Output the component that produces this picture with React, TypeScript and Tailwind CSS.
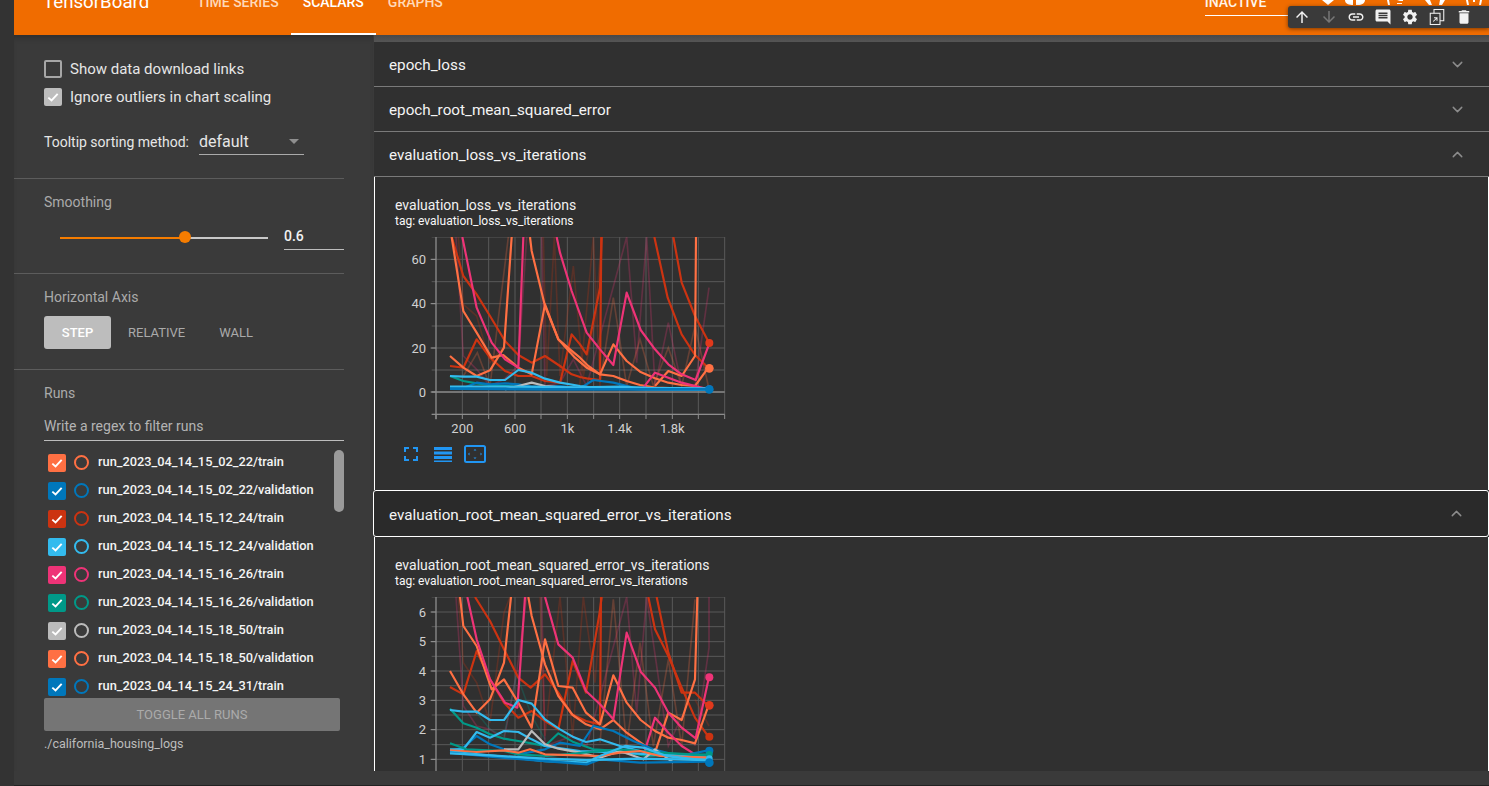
import { ChevronDown, ChevronUp } from "lucide-react";

const OR = "#ff7043", BL = "#0077bb", RD = "#cc3311", CY = "#33bbee", MG = "#ee3377", TL = "#009988", GY = "#bbbbbb";
const runs: [string, string][] = [
  ["run_2023_04_14_15_02_22/train", OR],
  ["run_2023_04_14_15_02_22/validation", BL],
  ["run_2023_04_14_15_12_24/train", RD],
  ["run_2023_04_14_15_12_24/validation", CY],
  ["run_2023_04_14_15_16_26/train", MG],
  ["run_2023_04_14_15_16_26/validation", TL],
  ["run_2023_04_14_15_18_50/train", GY],
  ["run_2023_04_14_15_18_50/validation", OR],
  ["run_2023_04_14_15_24_31/train", BL],
];

type S = [string, string, number?];

const faint1: S[] = [
  [RD, "235,143 250,345 290,380 330,520 372,470 395,143"],
  [MG, "228,143 250,500 290,540 330,590 372,570 415,530 440,143"],
  [OR, "250,560 292,490 330,590 385,143"],
  [RD, "490,143 500,560 523,143 540,560 580,230 610,560 645,400 665,143"],
  [MG, "485,143 495,590 540,580 580,510 620,590 740,143 770,520 800,143 825,590 865,400 905,590"],
  [OR, "660,580 700,325 740,590 780,450 820,590 865,475 905,590 945,410 985,590"],
  [MG, "945,590 987,295"],
  [RD, "560,590 598,600 640,143 660,590"],
];
const series1: S[] = [
  [TL, "210,560 250,575 290,582 330,587 375,590 415,593 500,596 640,598 985,600"],
  [RD, "215,143 250,260 290,315 330,380 375,455 415,497 455,520 495,500 540,530 575,555 600,563 620,567 660,572 664,143"],
  [RD, "210,530 250,535 290,450 330,505 375,545 415,560 455,560 495,575 540,580 575,435 600,465 620,495 660,295 665,143"],
  [RD, "823,143 863,325 905,435 945,497 985,535"],
  [RD, "880,143 905,280 945,380 987,460"],
  [OR, "210,500 250,535 290,560 330,543 372,475 395,143"],
  [OR, "215,143 250,365 290,430 335,505 370,497 415,535 455,555 495,345 535,450 570,480 600,505 625,530 660,555 700,465 740,515 780,547 825,567 865,580 905,587 945,590 985,535"],
  [OR, "450,143 455,185 495,350 535,450 585,505 620,535 660,555 700,560 740,575 780,587 825,595 985,600"],
  [OR, "825,590 865,545 905,560 945,500 948,143"],
  [MG, "247,143 290,355 335,460 375,510 415,535 430,143"],
  [MG, "530,143 540,190 575,305 620,430 660,480 700,527 740,310 782,422 825,480 865,525 905,555 947,572 987,465"],
  [MG, "790,595 825,550 865,565 905,580 985,600"],
  [BL, "210,596 250,596 290,580 330,585 375,582 415,585 455,592 540,590 600,597 640,572 700,580 760,595 985,600"],
  [GY, "375,600 415,590 455,580 495,590 600,598 985,600"],
  [CY, "210,560 250,562 290,562 330,572 375,572 415,542 455,550 495,568 540,580 600,590 660,597 720,598 800,600 985,602"],
  [CY, "210,592 400,592 600,594 720,592 800,596 985,597", 7],
  [BL, "210,598 500,600 985,600", 8],
];
const markers1: [string, number, number, number][] = [
  [MG, 988, 598, 10], ["#e0391c", 988, 461, 12], [OR, 988, 537, 13], [BL, 988, 600, 13],
];
const grid1 = { h: [143, 210, 277, 343, 410, 476, 542, 675], labels: [["60", 210], ["40", 343], ["20", 476], ["0", 608]] as [string, number][] };

const faint2: S[] = [
  [RD, "235,143 250,340 290,400 330,520 372,190 390,143"],
  [MG, "228,143 250,470 290,530 330,540 372,570 410,370 440,143"],
  [TL, "290,490 330,540 372,560 410,375 455,500 495,570"],
  [RD, "480,143 495,560 540,143 578,560 610,143 645,400 665,143"],
  [MG, "485,143 495,590 578,560 620,590 740,143 770,490 800,143 825,315 865,590 905,500"],
  [OR, "660,580 700,150 740,590 780,280 820,590 865,330 905,590 945,150"],
  [MG, "945,590 987,295 987,143"],
  [RD, "945,450 987,530"],
];
const series2: S[] = [
  [RD, "285,143 330,215 372,300 415,385 452,415 495,375 535,430 575,495 618,515 660,525 663,143"],
  [RD, "210,413 250,435 290,305 330,390 372,460 415,505 455,485 495,515 535,540 578,335 618,430 658,195 665,143"],
  [RD, "805,143 825,240 865,320 905,415 945,505 985,562"],
  [RD, "830,143 865,310 905,430 945,430 985,470"],
  [OR, "240,143 250,230 290,290 335,420 372,390 415,460 455,535 495,270 535,410 578,415 618,490 660,525 700,378 740,460 782,512 825,545 865,565 905,572 945,582 985,470"],
  [OR, "210,365 250,435 290,490 330,450 372,340 393,143"],
  [OR, "445,143 455,200 495,345 535,440 578,497 618,525 660,540 700,512 740,550 782,580 825,610 865,490 905,512 945,390 952,143"],
  [MG, "262,143 290,270 330,390 375,460 412,475 435,143"],
  [MG, "495,143 535,285 578,325 618,425 660,465 700,510 740,250 782,367 825,415 865,490 905,535 947,567 987,383"],
  [MG, "790,620 825,505 865,550 905,590 945,615 985,625"],
  [TL, "210,478 250,522 290,535 330,555 372,568 415,575 455,582 495,590 535,552 578,577 640,600 720,605 800,620 985,615"],
  [BL, "210,605 250,595 290,560 330,585 372,600 415,615 495,600 540,580 600,590 640,530 700,545 760,575 820,600 900,620 985,603"],
  [CY, "210,482 250,487 290,487 330,512 372,512 415,452 455,463 495,510 540,540 578,562 618,578 660,570 720,590 780,605 985,630"],
  [CY, "210,600 250,600 290,548 330,565 372,545 415,548 455,570 495,590 600,605 720,610 985,625"],
  [GY, "372,600 415,600 455,545 495,585 535,598 600,610 660,625 720,605 790,630 825,600 880,640"],
  [TL, "210,582 260,600 372,605 415,615 500,620 720,600 840,610 985,618"],
  [OR, "210,603 290,608 372,603 415,610 450,600 495,615 660,620 720,610 780,605 840,620 985,625"],
  [CY, "210,608 330,618 495,635 620,640 660,620 735,590 790,595 860,620 985,635", 7],
  [BL, "210,610 330,622 495,635 620,645 660,630 780,640 985,637", 7],
  [CY, "210,612 330,618 495,628 620,632 780,628 985,632", 7],
];
const markers2: [string, number, number, number][] = [
  [MG, 988, 384, 12], ["#e0391c", 988, 468, 13], [RD, 988, 562, 12], [BL, 988, 604, 12], [TL, 988, 615, 10], [CY, 988, 628, 10], [BL, 988, 640, 13],
];
const grid2 = { h: [143, 188, 232, 277, 321, 365, 409, 453, 497, 541, 586, 630, 675], labels: [["6", 188], ["5", 277], ["4", 365], ["3", 453], ["2", 541], ["1", 630]] as [string, number][] };

const vx = [247, 326, 405, 483, 562, 641, 719, 798, 877, 955, 1034];

function Chart({ faint, series, markers, grid, zero, xLabels }: {
  faint: S[]; series: S[]; markers: [string, number, number, number][];
  grid: { h: number[]; labels: [string, number][] }; zero?: number; xLabels: boolean;
}) {
  return (
    <svg width="360" height="199" viewBox="0 143 1080 597" className="block overflow-hidden" style={{ fontFamily: "Roboto, sans-serif" }}>
      {vx.map((x) => <line key={x} x1={x} x2={x} y1={143} y2={675} stroke="#595959" strokeWidth="3" />)}
      {grid.h.map((y) => <line key={y} x1={155} x2={1034} y1={y} y2={y} stroke="#595959" strokeWidth="3" />)}
      {grid.labels.map(([t, y]) => (
        <g key={t}>
          <line x1={152} x2={168} y1={y} y2={y} stroke="#999" strokeWidth="3" />
          <text x={138} y={y + 14} textAnchor="end" fontSize="39" fill="#d0d0d0">{t}</text>
        </g>
      ))}
      {faint.map(([c, p], i) => <polyline key={i} points={p} fill="none" stroke={c} strokeOpacity="0.25" strokeWidth="5" />)}
      {zero !== undefined && <line x1={155} x2={1034} y1={zero} y2={zero} stroke="#8c8c8c" strokeWidth="4" />}
      <line x1={168} x2={168} y1={143} y2={690} stroke="#8c8c8c" strokeWidth="4" />
      <line x1={155} x2={1034} y1={675} y2={675} stroke="#8c8c8c" strokeWidth="4" />
      {[168, ...vx].map((x) => <line key={x} x1={x} x2={x} y1={675} y2={689} stroke="#8c8c8c" strokeWidth="3" />)}
      {series.map(([c, p, w], i) => <polyline key={i} points={p} fill="none" stroke={c} strokeWidth={w ?? 6.5} strokeLinejoin="round" />)}
      {markers.map(([c, x, y, r], i) => <circle key={i} cx={x} cy={y} r={r} fill={c} />)}
      {xLabels && ([["200", 247], ["600", 405], ["1k", 562], ["1.4k", 719], ["1.8k", 877]] as [string, number][]).map(([t, x]) => (
        <text key={t} x={x} y={732} textAnchor="middle" fontSize="39" fill="#d0d0d0">{t}</text>
      ))}
    </svg>
  );
}

function Check({ color, size = 18 }: { color: string; size?: number }) {
  return (
    <span className="flex shrink-0 items-center justify-center rounded-[2px]" style={{ width: size, height: size, backgroundColor: color }}>
      <svg width="14" height="14" viewBox="0 0 24 24"><path d="M4 13l5.5 5L20 6.5" fill="none" stroke="#fff" strokeWidth="3.2" /></svg>
    </span>
  );
}

function Row({ title, open }: { title: string; open?: boolean }) {
  const C = open ? ChevronUp : ChevronDown;
  return (
    <div className="flex h-[45px] items-center justify-between border-b border-[#7a7a7a] bg-[#303030] pl-[15px] pr-[23px] text-[15.25px] text-[#f4f4f4]">
      <span className="pt-[2px]">{title}</span>
      <C size={17} strokeWidth={2} className="text-[#8c8c8c]" />
    </div>
  );
}

const P = ({ d }: { d: string }) => <path d={d} fill="currentColor" />;

function Toolbar() {
  return (
    <div className="absolute left-[1288px] top-[6px] flex h-[22px] w-[201px] items-center gap-[9px] rounded-l-[3px] bg-[#3a3a3a] pl-[5px] text-[#f2f2f2] shadow-[0_1px_4px_rgba(0,0,0,0.5)]">
      <svg width="18" height="18" viewBox="0 0 24 24"><P d="M4 12l1.41 1.41L11 7.83V20h2V7.83l5.58 5.59L20 12l-8-8-8 8z" /></svg>
      <svg width="18" height="18" viewBox="0 0 24 24" className="text-[#777]"><P d="M20 12l-1.41-1.41L13 16.17V4h-2v12.17l-5.58-5.59L4 12l8 8 8-8z" /></svg>
      <svg width="18" height="18" viewBox="0 0 24 24"><P d="M3.9 12c0-1.71 1.39-3.1 3.1-3.1h4V7H7c-2.76 0-5 2.24-5 5s2.24 5 5 5h4v-1.9H7c-1.71 0-3.1-1.39-3.1-3.1zM8 13h8v-2H8v2zm9-6h-4v1.9h4c1.71 0 3.1 1.39 3.1 3.1s-1.39 3.1-3.1 3.1h-4V17h4c2.76 0 5-2.24 5-5s-2.24-5-5-5z" /></svg>
      <svg width="18" height="18" viewBox="0 0 24 24"><P d="M21.99 4c0-1.1-.89-2-1.99-2H4c-1.1 0-2 .9-2 2v12c0 1.1.9 2 2 2h14l4 4-.01-18zM18 14H6v-2h12v2zm0-3H6V9h12v2zm0-3H6V6h12v2z" /></svg>
      <svg width="18" height="18" viewBox="0 0 24 24"><P d="M19.14 12.94c.04-.3.06-.61.06-.94 0-.32-.02-.64-.07-.94l2.03-1.58c.18-.14.23-.41.12-.61l-1.92-3.32c-.12-.22-.37-.29-.59-.22l-2.39.96c-.5-.38-1.03-.7-1.62-.94l-.36-2.54c-.04-.24-.24-.41-.48-.41h-3.84c-.24 0-.43.17-.47.41l-.36 2.54c-.59.24-1.13.57-1.62.94l-2.39-.96c-.22-.08-.47 0-.59.22L2.74 8.87c-.12.21-.08.47.12.61l2.03 1.58c-.05.3-.09.63-.09.94s.02.64.07.94l-2.03 1.58c-.18.14-.23.41-.12.61l1.92 3.32c.12.22.37.29.59.22l2.39-.96c.5.38 1.03.7 1.62.94l.36 2.54c.05.24.24.41.48.41h3.84c.24 0 .44-.17.47-.41l.36-2.54c.59-.24 1.13-.56 1.62-.94l2.39.96c.22.08.47 0 .59-.22l1.92-3.32c.12-.22.07-.47-.12-.61l-2.01-1.58zM12 15.6c-1.98 0-3.6-1.62-3.6-3.6s1.62-3.6 3.6-3.6 3.6 1.62 3.6 3.6-1.62 3.6-3.6 3.6z" /></svg>
      <svg width="18" height="18" viewBox="0 0 24 24" fill="none" stroke="currentColor" strokeWidth="1.4">
        <path d="M8 7V2h13v15h-5" /><rect x="3" y="7" width="13" height="15" /><path d="M7 18l5-5M8 13h4v4" />
      </svg>
      <svg width="18" height="18" viewBox="0 0 24 24"><P d="M6 19c0 1.1.9 2 2 2h8c1.1 0 2-.9 2-2V7H6v12zM19 4h-3.5l-1-1h-5l-1 1H5v2h14V4z" /></svg>
    </div>
  );
}

function ChartActions() {
  return (
    <div className="ml-[24px] mt-[9px] flex items-center text-[#2196f3]">
      <svg width="14" height="14" viewBox="0 0 14 14" fill="none" stroke="currentColor" strokeWidth="2"><path d="M1 5V1h4M9 1h4v4M13 9v4H9M5 13H1V9" /></svg>
      <svg width="18" height="15" viewBox="0 0 18 15" className="ml-[16px]" fill="currentColor"><rect y="0" width="18" height="3" /><rect y="4.5" width="18" height="3" /><rect y="9" width="18" height="3" /><rect y="13.5" width="18" height="1.5" /></svg>
      <svg width="22" height="18" viewBox="0 0 22 18" className="ml-[12px]" fill="none"><rect x="1" y="1" width="20" height="16" rx="1.5" stroke="currentColor" strokeWidth="2" /><path d="M11 4l-1.5 1.5h3zM11 14l-1.5-1.5h3zM4 9l1.5-1.5v3zM18 9l-1.5-1.5v3z" fill="currentColor" /></svg>
    </div>
  );
}

function Title({ name }: { name: string }) {
  return (
    <div className="ml-[15px]">
      <div className="text-[14px] leading-[16px] text-[#f0f0f0]">{name}</div>
      <div className="mt-[1px] text-[12px] leading-[15px] text-[#f8f8f8]">tag: {name}</div>
    </div>
  );
}

export default function App() {
  return (
    <div className="relative flex h-[786px] w-[1489px] overflow-hidden bg-[#333333] text-white" style={{ fontFamily: "Roboto, sans-serif" }}>
      <div className="w-[14px] shrink-0" />
      <div className="flex min-w-0 flex-1 flex-col">
        <header className="flex h-[35px] shrink-0 overflow-hidden bg-[#f06c00] text-[14px] font-medium leading-[4px]">
          <div className="ml-[29px] w-[106px] shrink-0 whitespace-nowrap text-[18.7px] font-normal text-white">TensorBoard</div>
          <div className="ml-[36px] flex shrink-0 whitespace-nowrap">
            <span className="h-[35px] px-[12px] text-[#ffd9b8]">TIME SERIES</span>
            <span className="h-[35px] border-b-2 border-white px-[12px] text-white">SCALARS</span>
            <span className="h-[35px] px-[12px] text-[#ffd9b8]">GRAPHS</span>
          </div>
          <div className="ml-[750px] h-[16px] w-[84px] shrink-0 whitespace-nowrap border-b border-white text-[#fff4ea]">INACTIVE</div>
          <svg width="170" height="6" viewBox="0 0 170 6" className="ml-[31px] shrink-0 text-white" fill="currentColor">
            <path d="M2 0h12l-6 5z" />
            <path d="M25 0h8v5c-4 0-8-1-8-5zM36 0h9c0 3-3 5-7 5h-2z" />
            <path d="M67 0h2l1 5h-2zM77 0h6v1h-3zM77 3h5v1h-5z" />
            <path d="M105 0h5l2 5h-3zM120 0h5l-3 5h-3z" />
            <path d="M146 0h2l1 5h-2zM160 0h2l-1 5h-2zM153 0h2v2h-2z" />
          </svg>
        </header>
        <div className="flex min-h-0 flex-1">
          <aside className="flex h-[736px] w-[359px] shrink-0 flex-col bg-[#3a3a3a] shadow-[inset_0_6px_6px_-4px_rgba(0,0,0,0.25)]">
            <section className="mr-[29px] h-[144px] shrink-0 border-b border-[#5c5c5c] pl-[30px] pt-[25px]">
              <div className="flex h-[18px] items-center gap-[8px] text-[15px] text-[#e6e6e6]">
                <span className="h-[18px] w-[18px] rounded-[2px] border-2 border-[#a6a6a6]" />Show data download links
              </div>
              <div className="mt-[10px] flex h-[18px] items-center gap-[8px] text-[15px] text-[#e6e6e6]">
                <Check color="#bdbdbd" />Ignore outliers in chart scaling
              </div>
              <div className="mt-[16px] flex items-start text-[14px] text-[#e6e6e6]">
                <span className="mt-[12px] leading-[17px]">Tooltip sorting method:</span>
                <div className="relative ml-[10px] h-[33px] w-[105px] border-b border-[#aaaaaa] pt-[10px] text-[16px] leading-[20px]">
                  default
                  <span className="absolute right-[5px] top-[17px] h-0 w-0 border-x-[5px] border-t-[5px] border-x-transparent border-t-[#8f8f8f]" />
                </div>
              </div>
            </section>
            <section className="mr-[29px] h-[95px] shrink-0 border-b border-[#5c5c5c] pl-[30px] pt-[14px]">
              <div className="text-[14px] leading-[18px] text-[#aaaaaa]">Smoothing</div>
              <div className="mt-[8px] flex items-start">
                <div className="relative ml-[16px] mt-[17px] flex h-[3px] w-[208px] items-center">
                  <div className="h-[2px] w-[125px] bg-[#f57c00]" />
                  <div className="h-[2px] flex-1 bg-[#c8c8c8]" />
                  <span className="absolute left-[119px] top-[-5px] h-[12px] w-[12px] rounded-full bg-[#f57c00]" />
                </div>
                <div className="ml-[16px] h-[31px] w-[60px] border-b border-[#bdbdbd] pt-[7px] text-[14px] font-medium leading-[20px] text-[#f2f2f2]">0.6</div>
              </div>
            </section>
            <section className="mr-[29px] h-[96px] shrink-0 border-b border-[#5c5c5c] pl-[30px] pt-[14px]">
              <div className="text-[14px] leading-[18px] text-[#aaaaaa]">Horizontal Axis</div>
              <div className="mt-[10px] flex h-[33px] items-center text-[13px] text-[#aaaaaa]">
                <span className="flex h-[33px] w-[67px] items-center justify-center rounded-[3px] bg-[#bdbdbd] font-medium text-white">STEP</span>
                <span className="ml-[17px]">RELATIVE</span>
                <span className="ml-[34px]">WALL</span>
              </div>
            </section>
            <section className="flex min-h-0 flex-1 flex-col pl-[30px] pr-[29px] pt-[14px]">
              <div className="text-[14px] leading-[18px] text-[#aaaaaa]">Runs</div>
              <div className="mt-[9px] h-[30px] border-b border-[#bdbdbd] pt-[6px] text-[14px] leading-[18px] text-[#b4b4b4]">Write a regex to filter runs</div>
              <div className="relative mt-[8px] h-[248px] overflow-hidden">
                <span className="absolute right-0 top-[1px] h-[62px] w-[10px] rounded-[5px] bg-[#9a9a9a]" />
                <div className="pl-[4px] pt-[5px]">
                  {runs.map(([n, c]) => (
                    <div key={n} className="flex h-[28px] items-start">
                      <Check color={c} />
                      <span className="ml-[8px] mt-[1px] h-[15px] w-[15px] shrink-0 rounded-full border-2" style={{ borderColor: c }} />
                      <span className="ml-[9px] text-[12.8px] font-medium leading-[16px] text-[#f4f4f4]">{n}</span>
                    </div>
                  ))}
                </div>
              </div>
              <div className="mt-[1px] flex h-[33px] w-[296px] shrink-0 items-center justify-center rounded-[2px] bg-[#757575] text-[13px] text-[#ababab]">TOGGLE ALL RUNS</div>
              <div className="mt-[5px] text-[12.5px] leading-[16px] text-[#bdbdbd]">./california_housing_logs</div>
            </section>
          </aside>
          <main className="flex h-[736px] min-w-0 flex-1 flex-col overflow-hidden bg-[#3a3a3a] pl-[1px]">
            <div className="h-[7px] shrink-0 bg-gradient-to-b from-[#484848] to-[#555555]" />
            <Row title="epoch_loss" />
            <Row title="epoch_root_mean_squared_error" />
            <div className="border-b border-white"><div className="-mb-px"><Row title="evaluation_loss_vs_iterations" open /></div></div>
            <div className="h-[313px] shrink-0 border-x border-white bg-[#303030] pl-[5px] pt-[20px]">
              <Title name="evaluation_loss_vs_iterations" />
              <div className="mt-[8px]">
                <Chart faint={faint1} series={series1} markers={markers1} grid={grid1} zero={608} xLabels />
              </div>
              <ChartActions />
            </div>
            <div className="relative -ml-[1px] flex h-[47px] shrink-0 items-center justify-between rounded-[3px] border border-white bg-[#2a2a2a] pl-[15px] pr-[23px] text-[15.25px] text-[#f4f4f4]">
              <span className="pt-[3px]">evaluation_root_mean_squared_error_vs_iterations</span>
              <ChevronUp size={17} strokeWidth={2} className="text-[#8c8c8c]" />
            </div>
            <div className="min-h-0 flex-1 overflow-hidden border-x border-white bg-[#303030] pl-[5px] pt-[20px]">
              <Title name="evaluation_root_mean_squared_error_vs_iterations" />
              <div className="mt-[8px]">
                <Chart faint={faint2} series={series2} markers={markers2} grid={grid2} xLabels={false} />
              </div>
            </div>
          </main>
        </div>
        <div className="h-[15px] shrink-0 border-b border-[#222222] bg-[#3a3a3a]" />
      </div>
      <Toolbar />
    </div>
  );
}
